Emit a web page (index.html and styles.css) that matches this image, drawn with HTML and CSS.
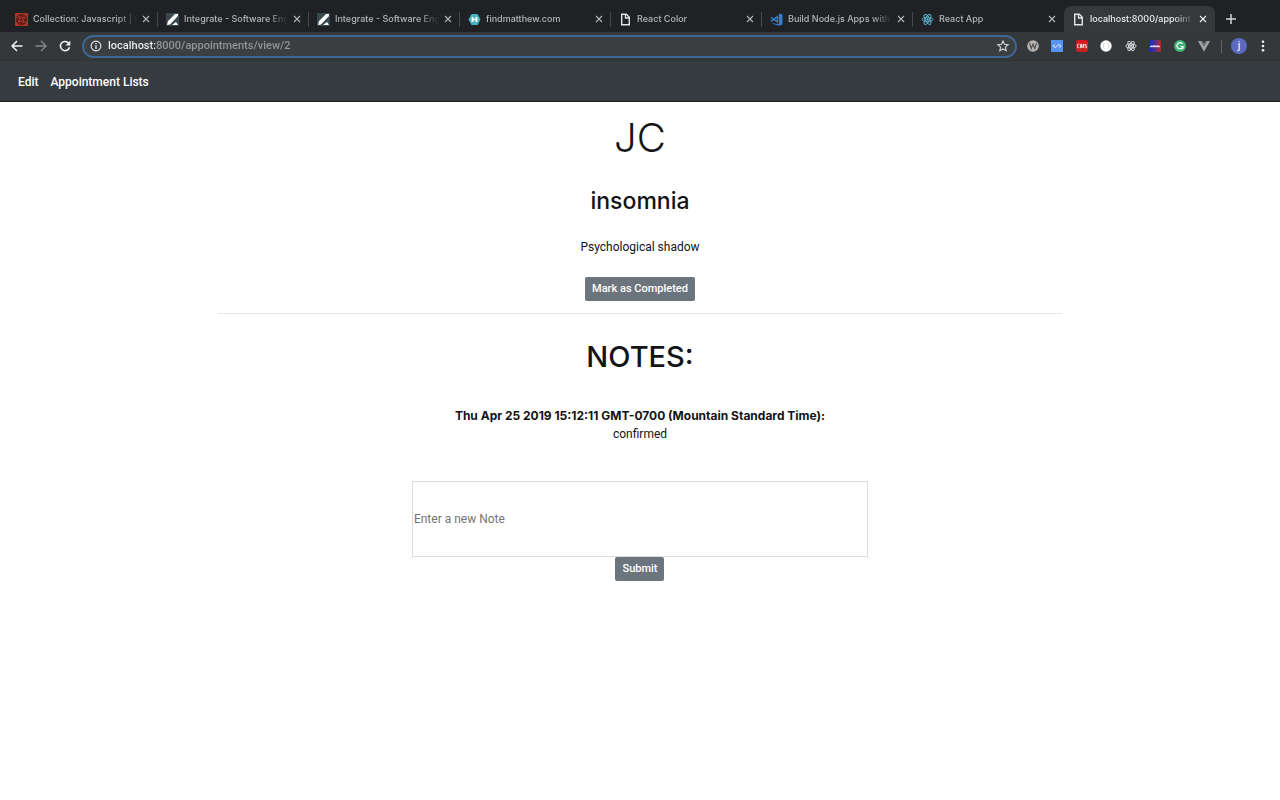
FILE: index.html
```html
<!DOCTYPE html>
<html lang="en">
<head>
<meta charset="utf-8">
<meta name="viewport" content="width=device-width, initial-scale=1">
<title>Appointment</title>
<link rel="stylesheet" href="styles.css">
</head>
<body>
<svg class="defs" aria-hidden="true">
  <symbol id="close" viewBox="0 0 8 8"><path d="M1 1l6 6M7 1L1 7" fill="none" stroke="currentColor" stroke-width="1.1"/></symbol>
  <symbol id="pen" viewBox="0 0 13 13"><path fill="#37474b" d="M0 0h13v13H0z"/><path fill="#fff" d="M1 12l1-4L9 1h3v2L4 11.500zM6 12l4-3 2 3z"/></symbol>
  <symbol id="page" viewBox="0 0 13 13"><path d="M2.700 1.200h4.600l3 3v7.600H2.700z" fill="none" stroke="#e4e5e7" stroke-width="1.400"/><path d="M6.500 1v4h4" fill="none" stroke="#e4e5e7" stroke-width="1.300"/></symbol>
  <symbol id="atom" viewBox="0 0 13 13"><g fill="none" stroke="currentColor" stroke-width="1"><ellipse cx="6.500" cy="6.500" rx="5.500" ry="2.200"/><ellipse cx="6.500" cy="6.500" rx="5.500" ry="2.200" transform="rotate(60 6.500 6.500)"/><ellipse cx="6.500" cy="6.500" rx="5.500" ry="2.200" transform="rotate(120 6.500 6.500)"/></g><circle cx="6.500" cy="6.500" r="1.200" fill="currentColor"/></symbol>
</svg>
<header class="browser">
  <div class="tabs">
    <div class="tab">
      <svg class="icon" viewBox="0 0 13 13"><path fill="#a93428" d="M0 0h13v13H0z"/><g fill="none" stroke="#4b1713" stroke-width=".9"><circle cx="6.500" cy="6.500" r="5"/><path d="M6.500 6.500c-2-2 0-4 2-3.500M6.500 6.500c2-2 4 0 3.500 2M6.500 6.500c2 2 0 4-2 3.500M6.500 6.500c-2 2-4 0-3.500-2M3 3c2-1 4-1 5 1M10 3c1 2 1 4-1 5M10 10c-2 1-4 1-5-1M3 10c-1-2-1-4 1-5"/></g></svg>
      <span class="tab-title">Collection: Javascript | C</span>
      <button class="close" aria-label="Close tab"><svg><use href="#close"/></svg></button>
    </div>
    <div class="tab">
      <svg class="icon"><use href="#pen"/></svg>
      <span class="tab-title">Integrate - Software Eng</span>
      <button class="close" aria-label="Close tab"><svg><use href="#close"/></svg></button>
    </div>
    <div class="tab">
      <svg class="icon"><use href="#pen"/></svg>
      <span class="tab-title">Integrate - Software Eng</span>
      <button class="close" aria-label="Close tab"><svg><use href="#close"/></svg></button>
    </div>
    <div class="tab">
      <svg class="icon" viewBox="0 0 13 13"><path fill="#45b5c4" d="M3.500 1h6l3 5.500-3 5.500h-6l-3-5.500z"/><path d="M4.500 4v5M8.500 4v5M4.500 6.500h4" fill="none" stroke="#fff" stroke-width="1.700"/></svg>
      <span class="tab-title">findmatthew.com</span>
      <button class="close" aria-label="Close tab"><svg><use href="#close"/></svg></button>
    </div>
    <div class="tab">
      <svg class="icon"><use href="#page"/></svg>
      <span class="tab-title">React Color</span>
      <button class="close" aria-label="Close tab"><svg><use href="#close"/></svg></button>
    </div>
    <div class="tab">
      <svg class="icon" viewBox="0 0 13 13"><path fill="#2f7ed0" d="M9 .3l3.500 1.200v10L9 12.700.8 10.200l8.200.8z"/><path d="M1 4.300l6.500 4.500V3.500L1 8.300" fill="none" stroke="#2f7ed0" stroke-width="1.500"/></svg>
      <span class="tab-title">Build Node.js Apps with</span>
      <button class="close" aria-label="Close tab"><svg><use href="#close"/></svg></button>
    </div>
    <div class="tab tab-last">
      <svg class="icon icon-react"><use href="#atom"/></svg>
      <span class="tab-title">React App</span>
      <button class="close" aria-label="Close tab"><svg><use href="#close"/></svg></button>
    </div>
    <div class="tab tab-active">
      <svg class="icon"><use href="#page"/></svg>
      <span class="tab-title">localhost:8000/appoint</span>
      <button class="close" aria-label="Close tab"><svg><use href="#close"/></svg></button>
    </div>
    <button class="new-tab" aria-label="New tab"><svg viewBox="0 0 10 10"><path d="M5 0v10M0 5h10" stroke="currentColor" stroke-width="1.500"/></svg></button>
  </div>
  <div class="toolbar">
    <div class="history">
      <button aria-label="Back"><svg viewBox="0 0 12 12"><path d="M11.500 6H1.500M6 1L1 6l5 5" fill="none" stroke="#f1f2f3" stroke-width="1.500"/></svg></button>
      <button aria-label="Forward"><svg viewBox="0 0 12 12"><path d="M.5 6h10M6 1l5 5-5 5" fill="none" stroke="#83878a" stroke-width="1.400"/></svg></button>
      <button aria-label="Reload"><svg viewBox="0 0 12 12"><path d="M9.700 3.200A4.600 4.600 0 1 0 10.500 7.200" fill="none" stroke="#f1f2f3" stroke-width="1.500"/><path d="M11.300.8v4.700H6.600z" fill="#f1f2f3"/></svg></button>
    </div>
    <div class="address">
      <svg class="info" viewBox="0 0 12 12"><circle cx="6" cy="6" r="4.900" fill="none" stroke="#e8eaed" stroke-width="1.100"/><path d="M6 3v1.300M6 5.300v3.700" stroke="#e8eaed" stroke-width="1.300"/></svg>
      <input class="url" type="text" aria-label="Address" value="localhost:8000/appointments/view/2">
      <button class="star" aria-label="Bookmark"><svg viewBox="0 0 12 12"><path d="M6 1l1.500 3.300 3.600.4-2.700 2.400.8 3.600L6 8.900l-3.200 1.800.8-3.600L.9 4.700l3.600-.4z" fill="none" stroke="#d5d7da" stroke-width="1.100"/></svg></button>
    </div>
    <div class="extensions">
      <button aria-label="Wappalyzer"><svg viewBox="0 0 12 12"><circle cx="6" cy="6" r="5.800" fill="#b9b5b3"/><path d="M2.500 3l1.700 5.500L6 4l1.800 4.500L9.500 3" fill="none" stroke="#514d4c" stroke-width="1.100"/></svg></button>
      <button aria-label="Dev tools"><svg viewBox="0 0 12 12"><path fill="#5794ed" d="M0 0h12v12H0z"/><path d="M4 4.500L2 6l2 1.500M8 4.500L10 6 8 7.500M4 7.500c2 0 2-3 4-3" fill="none" stroke="#dce8fb"/></svg></button>
      <button aria-label="CORS"><svg viewBox="0 0 12 12"><rect width="12" height="12" rx="2" fill="#c52222"/><path d="M3.300 4.300H1.700v3.400h1.600M4.500 4.300h1v3.400h-1zM7 8V4.300h1V6H7l1 2M10.500 4.300H9.300V6h1.200v1.700H9.200" fill="none" stroke="#fff" stroke-width=".8"/></svg></button>
      <button aria-label="JSON viewer"><svg viewBox="0 0 12 12"><circle cx="6" cy="6" r="5.700" fill="#fff"/><path d="M4.500 3.500C3 3.500 4 6 3 6c1 0 0 2.500 1.500 2.500M7.500 3.500C9 3.500 8 6 9 6 8 6 9 8.500 7.500 8.500" fill="none" stroke="#bbb" stroke-width=".6"/></svg></button>
      <button class="icon-white" aria-label="React tools"><svg><use href="#atom"/></svg></button>
      <button aria-label="Recorder"><svg viewBox="0 0 12 12"><defs><linearGradient id="rb"><stop offset=".2" stop-color="#1a2ec5"/><stop offset="1" stop-color="#bd2c22"/></linearGradient></defs><rect width="12" height="12" rx="2" fill="url(#rb)"/><path d="M1 6.800c1-1.300 2-1.300 3-.6 1-1 2-.8 3 0 1-.8 3-.8 4 .6z" fill="#fff" stroke="#fff" stroke-width=".5"/></svg></button>
      <button aria-label="Grammarly"><svg viewBox="0 0 12 12"><circle cx="6" cy="6" r="6" fill="#3fb274"/><path d="M8.500 4A3.100 3.100 0 1 0 9 6.500H6.700M9 6.300v2.500" fill="none" stroke="#fff" stroke-width="1.200"/></svg></button>
      <button aria-label="Vue tools"><svg viewBox="0 0 12 12"><path fill="#a5a6a7" d="M0 1h12L6 11.500z"/><path fill="#6d7173" d="M2.500 1h7L6 7z"/><path fill="#33373a" d="M4.500 1h3L6 3.500z"/></svg></button>
    </div>
    <span class="divider"></span>
    <button class="avatar" aria-label="Profile">j</button>
    <button class="more" aria-label="Menu"><svg viewBox="0 0 4 12"><g fill="#f1f2f3"><circle cx="2" cy="1.700" r="1.300"/><circle cx="2" cy="6" r="1.300"/><circle cx="2" cy="10.300" r="1.300"/></g></svg></button>
  </div>
</header>
<nav class="navbar">
  <a href="#edit">Edit</a>
  <a href="#lists">Appointment Lists</a>
</nav>
<main class="content">
  <h1 class="name">JC</h1>
  <h2 class="reason">insomnia</h2>
  <p class="description">Psychological shadow</p>
  <button class="btn">Mark as Completed</button>
  <hr class="rule">
  <h2 class="notes-title">NOTES:</h2>
  <div class="note">
    <strong>Thu Apr 25 2019 15:12:11 GMT-0700 (Mountain Standard Time):</strong>
    <p>confirmed</p>
  </div>
  <form class="note-form">
    <input class="note-input" type="text" aria-label="New note" placeholder="Enter a new Note">
    <button class="btn" type="button">Submit</button>
  </form>
</main>
</body>
</html>
```
FILE: styles.css
```css
* { box-sizing: border-box; }
body { margin: 0; background: #fff; color: #121417; font-family: Roboto, "Liberation Sans", sans-serif; font-size: 12px; line-height: 18px; }
button { font: inherit; color: inherit; border: 0; background: none; padding: 0; cursor: pointer; }
h1, h2, p { margin: 0; }
h1, h2, strong, .tabs { font-family: Inter, "Liberation Sans", sans-serif; }
svg { display: block; }
.defs { position: absolute; width: 0; height: 0; }

.tabs { display: flex; height: 32px; padding: 6px 0 0 7px; background: #202124; color: #b4b7bb; font-size: 9px; font-weight: 500; }
.tab { display: flex; align-items: center; flex: 0 1 151px; min-width: 0; padding: 0 8px; position: relative; }
.tab:not(.tab-last):not(.tab-active)::after { content: ""; position: absolute; right: 0; top: 6px; height: 15px; width: 1px; background: #48494c; }
.tab-active { background: #35393c; color: #eceef0; border-radius: 7px 7px 0 0; }
.icon { width: 13px; height: 13px; flex: none; margin-right: 5px; }
.icon-react { color: #55b0c8; }
.icon-white { color: #dfe0e1; }
.tab-title { flex: 1; min-width: 0; overflow: hidden; white-space: nowrap; mask-image: linear-gradient(to right, #000 calc(100% - 20px), transparent); margin-right: 5px; }
.close { width: 8px; height: 8px; flex: none; }
.close svg { width: 8px; height: 8px; }
.new-tab { margin-left: 11px; width: 10px; color: #d4d6d8; }
.new-tab svg { width: 10px; height: 10px; }

.toolbar { display: flex; align-items: center; height: 28px; padding: 0 15px 0 11px; background: #35383b; }
.history { display: flex; gap: 12px; margin-right: 11px; }
.history svg { width: 12px; height: 12px; }
.address { display: flex; align-items: center; flex: 1; min-width: 0; height: 23px; padding: 0 6px; border: 2px solid #3c6694; border-radius: 12px; background: #3c3f42; }
.info { width: 12px; height: 12px; margin-right: 6px; flex: none; }
.url { flex: 1; min-width: 0; padding: 0; border: 0; outline: 0; font: inherit; font-size: 11px; font-weight: 500; color: transparent; background: linear-gradient(to right, #f1f2f3 47px, #94979a 47px); background-clip: text; -webkit-background-clip: text; }
.star svg { width: 12px; height: 12px; }
.extensions { display: flex; flex: none; justify-content: space-between; width: 183px; margin: 0 11px 0 10px; }
.extensions svg { width: 12px; height: 12px; }
.divider { width: 1px; height: 13px; background: #606367; margin-right: 9px; }
.avatar { width: 16px; height: 16px; border-radius: 50%; background: #5c6bc0; color: #fff; font-size: 11px; line-height: 16px; }
.more { margin-left: 14px; }
.more svg { width: 4px; height: 12px; }

.navbar { display: flex; align-items: center; gap: 12px; height: 42px; padding: 2px 18px 0; background: #363b3f; border-top: 1px solid #303437; border-bottom: 1px solid #171b1f; }
.navbar a { color: #fff; text-decoration: none; font-weight: 500; }

.content { display: flex; flex-direction: column; align-items: center; width: 66%; margin: 0 auto; padding-top: 11px; text-align: center; }
.name { font-size: 40px; line-height: 50px; font-weight: 300; margin-bottom: 22px; }
.reason { font-size: 23px; line-height: 32px; font-weight: 500; margin-bottom: 21px; }
.description { margin-bottom: 21px; }
.btn { height: 24px; padding: 0 7px; border-radius: 2px; background: #6c757d; color: #fff; font-size: 11px; font-weight: 500; }
.rule { width: 100%; height: 1px; border: 0; background: #e6e6e6; margin: 12px 0 24px; }
.notes-title { font-size: 29px; line-height: 38px; font-weight: 500; margin-bottom: 31px; }
.note { margin-bottom: 38px; }
.note strong { display: block; font-weight: 700; }
.note-form { display: flex; flex-direction: column; align-items: center; width: 54%; }
.note-input { width: 100%; height: 76px; padding: 1px; border: 1px solid #dcdcdc; background: #fff; font: inherit; color: inherit; }
.note-input::placeholder { color: #757575; opacity: 1; }
```
